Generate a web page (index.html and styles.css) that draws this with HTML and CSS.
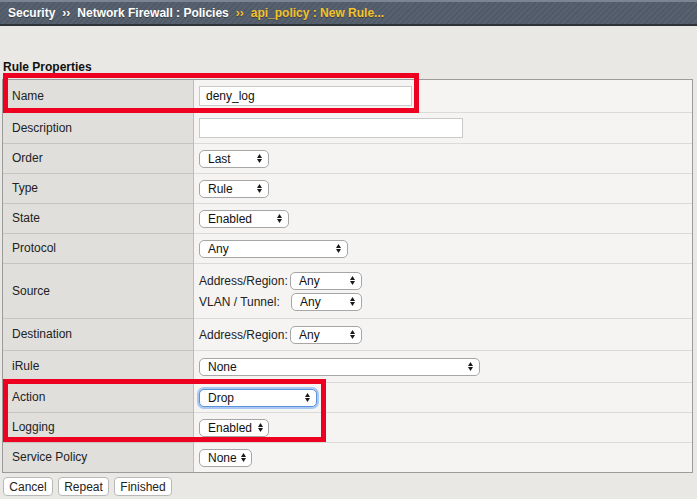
FILE: index.html
```html
<!DOCTYPE html>
<html>
<head>
<meta charset="utf-8">
<link rel="stylesheet" href="styles.css">
</head>
<body>
<header class="crumbs">
  <span class="crumb">Security</span>
  <span class="sep">››</span>
  <span class="crumb">Network Firewall : Policies</span>
  <span class="sep sep-cur">››</span>
  <span class="crumb current">api_policy : New Rule...</span>
</header>

<h2 class="section-title">Rule Properties</h2>

<div class="props">
  <div class="row h32 first">
    <div class="label marked">Name</div>
    <div class="value"><div class="input name-input">deny_log</div></div>
  </div>
  <div class="row h31">
    <div class="label">Description</div>
    <div class="value"><div class="input desc-input"></div></div>
  </div>
  <div class="row h30">
    <div class="label">Order</div>
    <div class="value"><div class="select w70"><span>Last</span><svg class="arr" width="5" height="9" viewBox="0 0 5 9"><polygon points="0,4 2.5,0 5,4"/><polygon points="0,5 5,5 2.5,9"/></svg></div></div>
  </div>
  <div class="row h30">
    <div class="label">Type</div>
    <div class="value"><div class="select w70"><span>Rule</span><svg class="arr" width="5" height="9" viewBox="0 0 5 9"><polygon points="0,4 2.5,0 5,4"/><polygon points="0,5 5,5 2.5,9"/></svg></div></div>
  </div>
  <div class="row h30">
    <div class="label">State</div>
    <div class="value"><div class="select w90"><span>Enabled</span><svg class="arr" width="5" height="9" viewBox="0 0 5 9"><polygon points="0,4 2.5,0 5,4"/><polygon points="0,5 5,5 2.5,9"/></svg></div></div>
  </div>
  <div class="row h30">
    <div class="label">Protocol</div>
    <div class="value"><div class="select w149"><span>Any</span><svg class="arr" width="5" height="9" viewBox="0 0 5 9"><polygon points="0,4 2.5,0 5,4"/><polygon points="0,5 5,5 2.5,9"/></svg></div></div>
  </div>
  <div class="row h55">
    <div class="label">Source</div>
    <div class="value stack">
      <div class="pair"><span class="pair-label">Address/Region:</span><div class="select w72"><span>Any</span><svg class="arr" width="5" height="9" viewBox="0 0 5 9"><polygon points="0,4 2.5,0 5,4"/><polygon points="0,5 5,5 2.5,9"/></svg></div></div>
      <div class="pair"><span class="pair-label vlan">VLAN / Tunnel:</span><div class="select w71"><span>Any</span><svg class="arr" width="5" height="9" viewBox="0 0 5 9"><polygon points="0,4 2.5,0 5,4"/><polygon points="0,5 5,5 2.5,9"/></svg></div></div>
    </div>
  </div>
  <div class="row h32">
    <div class="label">Destination</div>
    <div class="value">
      <div class="pair"><span class="pair-label">Address/Region:</span><div class="select w72"><span>Any</span><svg class="arr" width="5" height="9" viewBox="0 0 5 9"><polygon points="0,4 2.5,0 5,4"/><polygon points="0,5 5,5 2.5,9"/></svg></div></div>
    </div>
  </div>
  <div class="row h32">
    <div class="label">iRule</div>
    <div class="value"><div class="select w281"><span>None</span><svg class="arr" width="5" height="9" viewBox="0 0 5 9"><polygon points="0,4 2.5,0 5,4"/><polygon points="0,5 5,5 2.5,9"/></svg></div></div>
  </div>
  <div class="row h30">
    <div class="label">Action</div>
    <div class="value"><div class="select w118 focused"><span>Drop</span><svg class="arr" width="5" height="9" viewBox="0 0 5 9"><polygon points="0,4 2.5,0 5,4"/><polygon points="0,5 5,5 2.5,9"/></svg></div></div>
  </div>
  <div class="row h30">
    <div class="label">Logging</div>
    <div class="value"><div class="select w70 tight"><span>Enabled</span><svg class="arr" width="5" height="9" viewBox="0 0 5 9"><polygon points="0,4 2.5,0 5,4"/><polygon points="0,5 5,5 2.5,9"/></svg></div></div>
  </div>
  <div class="row h30">
    <div class="label">Service Policy</div>
    <div class="value"><div class="select w53 tight"><span>None</span><svg class="arr" width="5" height="9" viewBox="0 0 5 9"><polygon points="0,4 2.5,0 5,4"/><polygon points="0,5 5,5 2.5,9"/></svg></div></div>
  </div>
</div>

<div class="actions">
  <button class="btn b-cancel">Cancel</button>
  <button class="btn b-repeat">Repeat</button>
  <button class="btn b-finished">Finished</button>
</div>

<div class="mark mark-name"></div>
<div class="mark mark-action"></div>
</body>
</html>
```

FILE: styles.css
```css
html, body {
  margin: 0;
  padding: 0;
}
body {
  background: #e9e8e4;
  font-family: "Liberation Sans", Arial, Helvetica, sans-serif;
  font-size: 12px;
  color: #222;
  position: relative;
  width: 697px;
  height: 499px;
  overflow: hidden;
}

.crumbs {
  box-sizing: border-box;
  height: 26px;
  border-top: 2px solid #7a8594;
  border-bottom: 2px solid #2e3237;
  background: repeating-linear-gradient(135deg, #57616f 0 2px, #515b68 2px 4px);
  display: flex;
  align-items: center;
  padding-left: 8px;
  padding-bottom: 1px;
  font-weight: bold;
  font-size: 12px;
  color: #fff;
  text-shadow: 0 1px 0 rgba(0,0,0,0.35);
  white-space: nowrap;
}
.sep {
  margin: 0 7px;
  font-size: 12px;
}
.sep-cur, .current {
  color: #f6c22b;
}

.section-title {
  margin: 34px 0 0 3px;
  font-size: 12px;
  line-height: 14px;
  font-weight: bold;
  color: #111;
}

.props {
  margin: 5px 4px 0 2px;
  border: 1px solid #9b9b9b;
  background: #f5f4f2;
}
.row {
  display: grid;
  grid-template-columns: 191px 1fr;
  box-sizing: border-box;
}
.row > div {
  box-sizing: border-box;
  border-top: 1px solid #dadad8;
  display: flex;
  align-items: center;
}
.row > .label {
  border-top-color: #c6c5c2;
}
.row.first > div {
  border-top: none;
}
.h30 { height: 30px; }
.h31 { height: 31px; }
.h32 { height: 32px; }
.h55 { height: 55px; }

.label {
  background: #e0dfdb;
  border-right: 1px solid #bdbcb9;
  padding-left: 9px;
  padding-bottom: 1px;
  color: #222;
}
.label.marked {
  box-shadow: inset 1px 0 0 #5d7fae;
}
.value {
  padding-left: 5px;
}
.value.stack {
  flex-direction: column;
  align-items: flex-start !important;
  justify-content: center;
  gap: 3px;
}
.pair {
  display: flex;
  align-items: center;
}
.pair-label {
  width: 91px;
  white-space: nowrap;
}
.pair-label.vlan {
  width: 92px;
}

.input {
  box-sizing: border-box;
  height: 20px;
  background: #fff;
  border: 1px solid #c9c9c9;
  padding-left: 6px;
  line-height: 18px;
  color: #111;
}
.name-input { width: 213px; }
.desc-input { width: 264px; }

.select {
  box-sizing: border-box;
  height: 18px;
  background: #fff;
  border: 1px solid #a6a6a6;
  border-radius: 5px;
  display: flex;
  align-items: center;
  justify-content: space-between;
  padding: 0 6px 0 8px;
  color: #111;
  white-space: nowrap;
}
.select.tight {
  padding-left: 8px;
  padding-right: 5px;
}
.select.focused {
  border-color: #5b92dc;
  box-shadow: 0 0 0 2px rgba(120, 170, 240, 0.6);
}
.arr {
  fill: #1a1a1a;
  flex: none;
}
.w53 { width: 53px; }
.w70 { width: 70px; }
.w71 { width: 71px; }
.w72 { width: 72px; }
.w90 { width: 90px; }
.w118 { width: 118px; }
.w149 { width: 149px; }
.w281 { width: 281px; }

.actions {
  display: flex;
  gap: 5px;
  margin: 4px 0 0 3px;
}
.btn {
  box-sizing: border-box;
  height: 19px;
  padding: 0;
  background: #fff;
  border: 1px solid #b9b9b9;
  border-radius: 4px;
  font-family: "Liberation Sans", Arial, Helvetica, sans-serif;
  font-size: 12px;
  color: #222;
}
.b-cancel { width: 50px; }
.b-repeat { width: 51px; }
.b-finished { width: 58px; }

.mark {
  position: absolute;
  box-sizing: border-box;
  border: 5px solid #ee0021;
}
.mark-name {
  left: 3px;
  top: 73px;
  width: 416px;
  height: 40px;
}
.mark-action {
  left: 3px;
  top: 379px;
  width: 323px;
  height: 63px;
}
```
